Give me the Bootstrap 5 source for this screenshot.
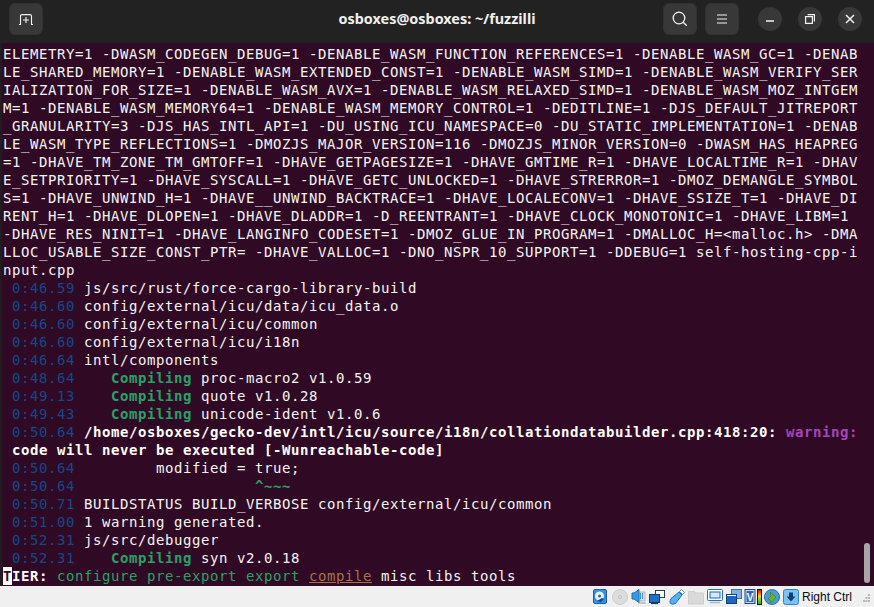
<!DOCTYPE html>
<html lang="en">
<head>
<meta charset="utf-8">
<title>osboxes@osboxes: ~/fuzzilli</title>
<link href="https://cdn.jsdelivr.net/npm/bootstrap@5.3.0/dist/css/bootstrap.min.css" rel="stylesheet">
<style>
html,body{height:100%;margin:0;overflow:hidden;background:#1e1e1e}
.vm-win{height:607px;width:874px}
.term-head{height:43px;background:#222222;padding:3px 0 0 9px}
.hbtn{width:34px;height:32px;background:#383838;border-radius:6px;border:1px solid #323232;color:#f2f2f2}
.wbtn{width:24px;height:24px;background:#383838;border-radius:50%;margin-top:4px}
.head-title{position:absolute;left:0;right:0;top:9px;text-align:center;font:700 14.4px/20px "Noto Sans",sans-serif;color:#f0f0f0}
.term-body{height:543px;margin-left:2px;padding:2px 0 0 1px;background:#300a24;color:#f4f4f4;font:14px/18px "DejaVu Sans Mono",monospace;letter-spacing:.57px;overflow:hidden}
.tl{height:18px;white-space:pre}
.ts{color:#12488b}
.cg{color:#26a269;font-weight:700}
.gr{color:#26a269}
.br{color:#a2734c;text-decoration:underline}
.wa{color:#a347ba;font-weight:700}
.st{font-weight:700;color:#fff}
.cur{background:#fff;color:#300a24;font-weight:700;display:inline-block;height:18px;width:9px;letter-spacing:0}
.sbar{position:absolute;left:864px;top:543px;width:6px;height:40px;background:#a9a5a7;border-radius:3px}
.vm-bar{height:21px;background:#f0f0f0;padding:3px 4px 0 0;color:#0a0a14;font:12px/16px "Liberation Sans",sans-serif}
.vm-bar svg{display:block;flex:none}
.vm-txt{margin:0 11px 0 3px}
.m2{margin-left:2px}.m1{margin-left:1px}.m3{margin-left:3px}.m4{margin-left:4px}
.gap8{margin-left:8px}.gap19{margin-left:19px}.gap16{margin-left:16px}.gap620{margin-left:620px}
</style>
</head>
<body>
<div class="vm-win position-relative d-flex flex-column">
  <div class="term-head d-flex">
    <div class="hbtn d-flex align-items-center justify-content-center">
      <svg width="14" height="11" viewBox="0 0 14 11" fill="none" stroke="#f2f2f2" stroke-width="1.1"><path d="M0 10.500h1.500V2.200Q1.500 .6 3.100 .6h7.800q1.600 0 1.600 1.600V10.500H14"/><path d="M7 3v6M4 6h6"/></svg>
    </div>
    <div class="hbtn d-flex align-items-center justify-content-center gap620">
      <svg width="16" height="16" viewBox="0 0 16 16" fill="none" stroke="#f2f2f2" stroke-width="1.300"><circle cx="7" cy="7" r="5.800"/><path d="M11.200 11.200l3.600 3.600"/></svg>
    </div>
    <div class="hbtn d-flex align-items-center justify-content-center gap8">
      <svg width="10" height="10" viewBox="0 0 10 10" fill="none" stroke="#f2f2f2" stroke-width="1.100"><path d="M0 1h10M0 5h10M0 9h10"/></svg>
    </div>
    <div class="wbtn d-flex align-items-center justify-content-center gap19">
      <svg width="10" height="10" viewBox="0 0 10 10" fill="none" stroke="#f2f2f2" stroke-width="1.500"><path d="M1 7h8"/></svg>
    </div>
    <div class="wbtn d-flex align-items-center justify-content-center gap16">
      <svg width="10" height="10" viewBox="0 0 10 10" fill="none" stroke="#f2f2f2" stroke-width="1.200"><path d="M.600 2.600h6.800v6.800H.600z"/><path d="M2.600 .6h6.800v6.800"/></svg>
    </div>
    <div class="wbtn d-flex align-items-center justify-content-center gap16">
      <svg width="10" height="10" viewBox="0 0 10 10" fill="none" stroke="#f2f2f2" stroke-width="1.500"><path d="M1 1l8 8M9 1l-8 8"/></svg>
    </div>
    <div class="head-title">osboxes@osboxes: ~/fuzzilli</div>
  </div>
  <div class="term-body">
<div class="tl">ELEMETRY=1 -DWASM_CODEGEN_DEBUG=1 -DENABLE_WASM_FUNCTION_REFERENCES=1 -DENABLE_WASM_GC=1 -DENAB</div>
<div class="tl">LE_SHARED_MEMORY=1 -DENABLE_WASM_EXTENDED_CONST=1 -DENABLE_WASM_SIMD=1 -DENABLE_WASM_VERIFY_SER</div>
<div class="tl">IALIZATION_FOR_SIZE=1 -DENABLE_WASM_AVX=1 -DENABLE_WASM_RELAXED_SIMD=1 -DENABLE_WASM_MOZ_INTGEM</div>
<div class="tl">M=1 -DENABLE_WASM_MEMORY64=1 -DENABLE_WASM_MEMORY_CONTROL=1 -DEDITLINE=1 -DJS_DEFAULT_JITREPORT</div>
<div class="tl">_GRANULARITY=3 -DJS_HAS_INTL_API=1 -DU_USING_ICU_NAMESPACE=0 -DU_STATIC_IMPLEMENTATION=1 -DENAB</div>
<div class="tl">LE_WASM_TYPE_REFLECTIONS=1 -DMOZJS_MAJOR_VERSION=116 -DMOZJS_MINOR_VERSION=0 -DWASM_HAS_HEAPREG</div>
<div class="tl">=1 -DHAVE_TM_ZONE_TM_GMTOFF=1 -DHAVE_GETPAGESIZE=1 -DHAVE_GMTIME_R=1 -DHAVE_LOCALTIME_R=1 -DHAV</div>
<div class="tl">E_SETPRIORITY=1 -DHAVE_SYSCALL=1 -DHAVE_GETC_UNLOCKED=1 -DHAVE_STRERROR=1 -DMOZ_DEMANGLE_SYMBOL</div>
<div class="tl">S=1 -DHAVE_UNWIND_H=1 -DHAVE__UNWIND_BACKTRACE=1 -DHAVE_LOCALECONV=1 -DHAVE_SSIZE_T=1 -DHAVE_DI</div>
<div class="tl">RENT_H=1 -DHAVE_DLOPEN=1 -DHAVE_DLADDR=1 -D_REENTRANT=1 -DHAVE_CLOCK_MONOTONIC=1 -DHAVE_LIBM=1</div>
<div class="tl">-DHAVE_RES_NINIT=1 -DHAVE_LANGINFO_CODESET=1 -DMOZ_GLUE_IN_PROGRAM=1 -DMALLOC_H=&lt;malloc.h&gt; -DMA</div>
<div class="tl">LLOC_USABLE_SIZE_CONST_PTR= -DHAVE_VALLOC=1 -DNO_NSPR_10_SUPPORT=1 -DDEBUG=1 self-hosting-cpp-i</div>
<div class="tl">nput.cpp</div>
<div class="tl"> <span class="ts">0:46.59</span> js/src/rust/force-cargo-library-build</div>
<div class="tl"> <span class="ts">0:46.60</span> config/external/icu/data/icu_data.o</div>
<div class="tl"> <span class="ts">0:46.60</span> config/external/icu/common</div>
<div class="tl"> <span class="ts">0:46.60</span> config/external/icu/i18n</div>
<div class="tl"> <span class="ts">0:46.64</span> intl/components</div>
<div class="tl"> <span class="ts">0:48.64</span>    <span class="cg">Compiling</span> proc-macro2 v1.0.59</div>
<div class="tl"> <span class="ts">0:49.13</span>    <span class="cg">Compiling</span> quote v1.0.28</div>
<div class="tl"> <span class="ts">0:49.43</span>    <span class="cg">Compiling</span> unicode-ident v1.0.6</div>
<div class="tl"> <span class="ts">0:50.64</span> <span class="st">/home/osboxes/gecko-dev/intl/icu/source/i18n/collationdatabuilder.cpp:418:20:</span> <span class="wa">warning:</span></div>
<div class="tl st"> code will never be executed [-Wunreachable-code]</div>
<div class="tl"> <span class="ts">0:50.64</span>         modified = true;</div>
<div class="tl"> <span class="ts">0:50.64</span>                    <span class="cg">^~~~</span></div>
<div class="tl"> <span class="ts">0:50.71</span> BUILDSTATUS BUILD_VERBOSE config/external/icu/common</div>
<div class="tl"> <span class="ts">0:51.00</span> 1 warning generated.</div>
<div class="tl"> <span class="ts">0:52.31</span> js/src/debugger</div>
<div class="tl"> <span class="ts">0:52.31</span>    <span class="cg">Compiling</span> syn v2.0.18</div>
<div class="tl"><span class="cur">T</span><span class="st">IER:</span> <span class="gr">configure pre-export export</span> <span class="br">compile</span> misc libs tools</div>
  </div>
  <div class="sbar"></div>
  <div class="vm-bar d-flex justify-content-end">
    <!-- hard disk -->
    <svg width="16" height="16" viewBox="0 0 16 16"><rect x="1.500" y=".5" width="13" height="14" rx="1.500" fill="#3a8ee0" stroke="#1a5fa8"/><circle cx="7.500" cy="7" r="4.500" fill="#e8f2fb"/><circle cx="7.500" cy="7" r="1.500" fill="#1f6cc0"/><path d="M5 12l5-3 2 1-3 3z" fill="#0f4a90"/></svg>
    <!-- optical -->
    <svg class="m4" width="16" height="16" viewBox="0 0 16 16"><circle cx="8" cy="8" r="7.500" fill="#dcdcdc" stroke="#cfcfcf"/><circle cx="8" cy="8" r="2" fill="#c4c4c4"/><circle cx="8" cy="8" r=".8" fill="#eee"/></svg>
    <!-- audio -->
    <svg class="m3" width="16" height="16" viewBox="0 0 16 16"><path d="M9 3h5v9H9z" fill="#dcdcdc" stroke="#b5b5b5"/><path d="M7 13h8v2H7z" fill="#c8c8c8"/><path d="M1 4h2l5-3.500v13L3 10H1z" fill="#3b97de" stroke="#1d6cb5"/><path d="M9.500 4v6M11.500 4v6" stroke="#3b97de"/></svg>
    <!-- network -->
    <svg class="m2" width="16" height="16" viewBox="0 0 16 16"><rect x="6.500" y="1.500" width="9" height="7" fill="#fff" stroke="#2c3e55"/><rect x=".5" y="5.500" width="10" height="8" fill="#1f72c9" stroke="#22384f"/><path d="M2 14.500h7" stroke="#22384f" stroke-width="1.200"/></svg>
    <!-- usb -->
    <svg class="m4" width="16" height="16" viewBox="0 0 16 16"><path d="M10 3l3 3-6.500 8.500Q3 16 1.500 14.500T2 9.500z" fill="#55b1ee" stroke="#1a73bf"/><path d="M10.500 2.500l2-2 3 3-2 2z" fill="#fff" stroke="#1a73bf" stroke-width=".8"/></svg>
    <!-- shared folder -->
    <svg class="m3" width="16" height="16" viewBox="0 0 16 16"><path d="M.5 2.500h6l1 1.500h8v11H.5z" fill="#dadada" stroke="#cfcfcf"/></svg>
    <!-- display -->
    <svg class="m3" width="16" height="16" viewBox="0 0 16 16"><rect x=".5" y=".5" width="15" height="11" rx="1" fill="#fff" stroke="#2172c4"/><rect x="3" y="3" width="10" height="6" fill="#d4e8f8" stroke="#1668b8"/><path d="M3 13.500h10" stroke="#b5b5b5" stroke-width="1.500"/></svg>
    <!-- capture -->
    <svg class="m3" width="16" height="16" viewBox="0 0 16 16"><rect x="5.500" y=".5" width="10" height="9" fill="#7fb1e6" stroke="#3e6fa8"/><rect x=".5" y="5.500" width="10" height="9" fill="#1a68bf" stroke="#153f70"/><path d="M1 6.500h9" stroke="#fff"/></svg>
    <!-- V chip -->
    <svg class="m2" width="12" height="16" viewBox="0 0 12 16"><rect x="1" y=".5" width="10" height="14" fill="#c9dcf2" stroke="#24457c"/><rect x="2.500" y="2" width="7" height="11" fill="#2f68b8"/><text x="6" y="11.500" text-anchor="middle" font-family="Liberation Sans" font-weight="700" font-size="10" fill="#fff">V</text></svg>
    <!-- meter -->
    <svg class="m1" width="5" height="16" viewBox="0 0 5 16"><defs><linearGradient id="mg" x1="0" y1="0" x2="0" y2="1"><stop offset="0" stop-color="#e01010"/><stop offset=".45" stop-color="#f0d000"/><stop offset="1" stop-color="#10c020"/></linearGradient></defs><rect width="5" height="16" fill="#111"/><rect x="1" y="1" width="3" height="14" fill="url(#mg)"/></svg>
    <!-- globe -->
    <svg class="m2" width="16" height="16" viewBox="0 0 16 16"><circle cx="8" cy="8" r="7.500" fill="#4e9bd8" stroke="#2a6fb0"/><path d="M6 3l6 5-5 6-1-3-2-1 3-3z" fill="#66b82a" stroke="#3e8a18" stroke-width=".8"/></svg>
    <!-- additions -->
    <svg class="m3" width="16" height="16" viewBox="0 0 16 16"><rect x=".5" y=".5" width="15" height="15" rx="2" fill="#7cc3f2" stroke="#2a86cc"/><path d="M6 3.500h4v4h2.500L8 12.500 3.500 7.500H6z" fill="#143e7a"/></svg>
    <span class="vm-txt">Right Ctrl</span>
    <svg width="7" height="16" viewBox="0 0 7 16" fill="#b8b8b8"><path d="M5 5h2v2H5zM2.500 8h2v2h-2zM5 8h2v2H5zM0 11h2v2H0zM2.500 11h2v2h-2zM5 11h2v2H5z"/></svg>
  </div>
</div>
<script src="https://cdn.jsdelivr.net/npm/bootstrap@5.3.0/dist/js/bootstrap.bundle.min.js"></script>
</body>
</html>
